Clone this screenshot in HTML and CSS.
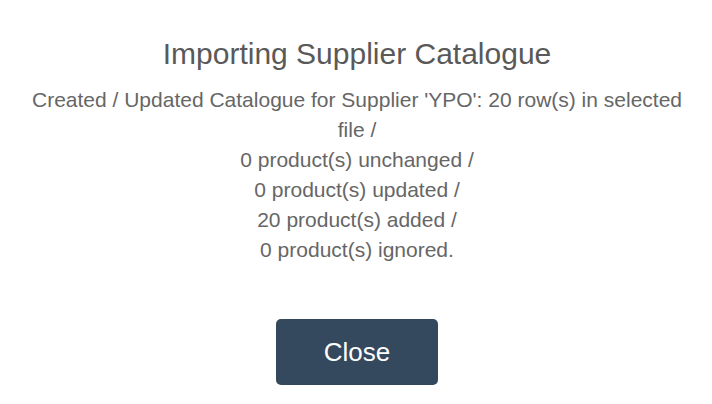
FILE: index.html
```html
<!DOCTYPE html>
<html>
<head>
<meta charset="utf-8">
<link rel="stylesheet" href="styles.css">
</head>
<body>
<div class="modal">
  <h2 class="title">Importing Supplier Catalogue</h2>
  <div class="content">Created / Updated Catalogue for Supplier 'YPO': 20 row(s) in selected file /<br>0 product(s) unchanged /<br>0 product(s) updated /<br>20 product(s) added /<br>0 product(s) ignored.</div>
  <div class="actions"><button class="btn">Close</button></div>
</div>
</body>
</html>
```
FILE: styles.css
```css
html, body { margin: 0; padding: 0; background: #fff; }
body { font-family: "Liberation Sans", Arial, sans-serif; }
.modal { width: 712px; height: 404px; box-sizing: border-box; padding: 35px 27px 0 29px; text-align: center; }
.title { margin: 0; font-size: 30px; font-weight: 400; color: #595959; line-height: 38px; }
.content { margin-top: 12px; font-size: 21px; line-height: 30px; color: #666666; }
.actions { margin-top: 54px; display: flex; justify-content: center; }
.btn { width: 162px; height: 66px; border: 0; border-radius: 5px; background: #34495e; color: #fff; font-family: "Liberation Sans", Arial, sans-serif; font-size: 26px; padding: 0; }
```
